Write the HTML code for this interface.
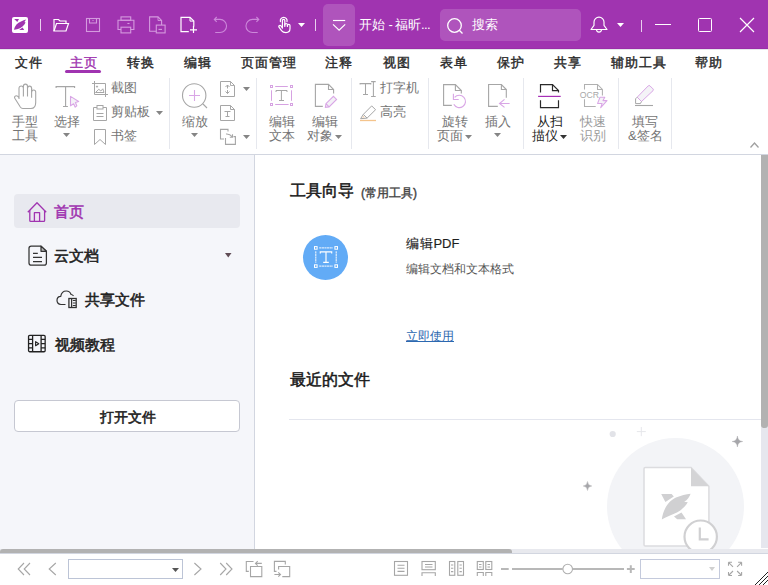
<!DOCTYPE html>
<html><head><meta charset="utf-8">
<style>
*{margin:0;padding:0;box-sizing:border-box}
html,body{width:768px;height:585px;overflow:hidden;background:#fff;font-family:"Liberation Sans",sans-serif;position:relative}
.a{position:absolute}
.t{position:absolute;white-space:nowrap}
svg{position:absolute;overflow:visible}
#title{left:0;top:0;width:768px;height:49px;background:#a034b0}
.tab{position:absolute;top:56px;font-size:13px;line-height:13px;letter-spacing:1px;font-weight:normal;-webkit-text-stroke:0.4px currentColor;color:#2a2a2a}
.rb{position:absolute;font-size:13px;line-height:14px;color:#747474;text-align:center;white-space:nowrap}
.sep{position:absolute;top:78px;width:1px;height:71px;background:#e6e8ee}
.side{position:absolute;font-size:15px;line-height:15px;-webkit-text-stroke:0.55px currentColor;color:#222;white-space:nowrap}
</style></head><body>
<!-- TITLE BAR -->
<div id="title" class="a"></div>
<div class="a" style="left:0;top:48px;width:768px;height:1px;background:#9a2ea8"></div>
<div class="a" style="left:0;top:49px;width:768px;height:1px;background:#e4e8ea"></div>

<!-- logo -->
<div class="a" style="left:12px;top:17px;width:16px;height:16px;background:#fff;border-radius:2px"></div>
<svg style="left:12px;top:17px" width="16" height="16" viewBox="0 0 16 16">
 <path d="M2.2 2.1 H7 L5.3 4.9 Z" fill="#a034b0"/>
 <path d="M1.9 12.8 C2.8 8.5 5.5 5.6 9 4.4 C10.8 3.7 12.6 3.1 14 2.6 C13.4 3.6 12.9 4.5 12.4 5 L13.6 5.6 C12 8.8 9.5 11.2 6 12 C4.5 12.3 3 12.6 1.9 12.8 Z" fill="#a034b0"/>
 <path d="M7.1 12.9 H12.2 L10.6 10.6 Z" fill="#a034b0"/>
</svg>
<div class="a" style="left:40px;top:19px;width:1px;height:12px;background:#e8d0ee"></div>

<!-- folder -->
<svg style="left:53px;top:18px" width="16" height="14" viewBox="0 0 16 14" fill="none" stroke="#fff" stroke-width="1.2">
 <path d="M1 13 V1.5 H5.5 L7 3 H13 V5.5"/><path d="M1 13 L3.5 5.5 H15.5 L13 13 Z"/>
</svg>
<!-- save faded -->
<svg style="left:86px;top:18px" width="14" height="14" viewBox="0 0 14 14" fill="none" stroke="#d49ade" stroke-width="1.1">
 <rect x="0.5" y="0.5" width="13" height="13"/><path d="M3.5 0.5 V5 H10.5 V0.5"/><path d="M6.5 2.5 H7.5"/>
</svg>
<!-- print faded -->
<svg style="left:117px;top:16px" width="18" height="18" viewBox="0 0 18 18" fill="none" stroke="#d49ade" stroke-width="1.1">
 <rect x="4" y="0.9" width="9.7" height="3.4"/><path d="M4 13.5 H1 V4.3 H16.9 V13.5 H13.7"/><rect x="4" y="11.2" width="9.7" height="5.7"/><path d="M10.4 7.5 H12.5"/>
</svg>
<!-- doc w box faded -->
<svg style="left:149px;top:16px" width="17" height="18" viewBox="0 0 17 18" fill="none" stroke="#d49ade" stroke-width="1.1">
 <path d="M7 15.3 H0.6 V0.9 H9 L12.6 4.5 V9"/><path d="M9 0.9 V4.5 H12.6" stroke-width="0.9"/><rect x="7.3" y="9.1" width="8.8" height="7.8"/><path d="M9.5 13.4 H13"/>
</svg>
<!-- new doc white -->
<svg style="left:180px;top:16px" width="18" height="18" viewBox="0 0 18 18" fill="none" stroke="#fff" stroke-width="1.2">
 <path d="M8.8 15.7 H1 V1.3 H10 L13.8 5.1 V10.5"/><path d="M10 1.3 V5.1 H13.8" stroke-width="1"/><path d="M13.5 10 V17.1 M10 13.8 H17"/>
</svg>
<!-- undo/redo faded -->
<svg style="left:205px;top:12px" width="60" height="26" viewBox="205 12 60 26" fill="none" stroke="#cc88da" stroke-width="1.1">
 <path d="M214.2 19.4 H220 A6.55 6.55 0 0 1 220 32.5 H215.2 M216.7 17 L214.3 19.4 L216.7 21.8"/>
 <path d="M258.8 19.4 H252.5 A6.55 6.55 0 0 0 252.5 32.5 H257.7 M256.4 17 L258.8 19.4 L256.4 21.8"/>
</svg>
<!-- hand -->
<svg style="left:277px;top:16px" width="16" height="18" viewBox="0 0 16 18" fill="none" stroke="#fff" stroke-width="1.2" stroke-linejoin="round" stroke-linecap="round">
 <path d="M3.4 5.6 A3.4 3.4 0 1 1 10 5.6"/>
 <path d="M5.4 12 V4.6 Q5.4 3.4 6.6 3.4 Q7.8 3.4 7.8 4.6 V10.5"/>
 <path d="M7.8 9 Q7.8 7.5 9.1 7.5 Q10.4 7.5 10.4 9 V10.5"/>
 <path d="M10.4 9.6 Q10.4 8.3 11.7 8.3 Q13 8.3 13 9.6 V12.6 Q13 16.6 9 16.6 Q6 16.6 4.5 14.6 L2 11.2 Q1.4 10.1 2.4 9.6 Q3.4 9.2 4.1 10 L5.4 11.8"/>
</svg>
<svg style="left:298px;top:23px" width="7" height="4" viewBox="0 0 7 4"><path d="M0 0 H7 L3.5 4Z" fill="#fff"/></svg>
<div class="a" style="left:315px;top:19px;width:1px;height:12px;background:#e8d0ee"></div>
<div class="a" style="left:323px;top:4px;width:32px;height:42px;background:rgba(255,255,255,0.16);border-radius:5px"></div>
<svg style="left:332px;top:19px" width="15" height="13" viewBox="0 0 15 13" fill="none" stroke="#fff" stroke-width="1.15">
 <path d="M1 1.5 H13.2"/><path d="M1 5.3 L7.1 11.2 L13.2 5.3"/>
</svg>
<div class="t" style="left:359px;top:18px;font-size:13px;line-height:13px;color:#fff">开始 -<span style="margin-left:-1.5px"> </span>福昕<span style="letter-spacing:-0.6px">...</span></div>
<!-- search -->
<div class="a" style="left:440px;top:9px;width:141px;height:32px;background:rgba(255,255,255,0.16);border-radius:5px"></div>
<svg style="left:447px;top:18px" width="17" height="16" viewBox="0 0 17 16" fill="none" stroke="#fff" stroke-width="1.3">
 <circle cx="7.5" cy="7.5" r="6.8"/><path d="M12.3 12.3 L15.5 15.5"/>
</svg>
<div class="t" style="left:472px;top:18px;font-size:13px;line-height:13px;color:#fff">搜索</div>
<!-- bell -->
<svg style="left:590px;top:16px" width="18" height="18" viewBox="0 0 18 18" fill="none" stroke="#fff" stroke-width="1.15" stroke-linejoin="round">
 <path d="M1 13.5 H17 L14 9.3 V6.1 A5 5 0 0 0 4 6.1 V9.3 Z"/><path d="M6.5 13.6 A2.5 2.5 0 0 0 11.5 13.6"/>
</svg>
<svg style="left:617px;top:23px" width="7" height="4" viewBox="0 0 7 4"><path d="M0 0 H7 L3.5 4Z" fill="#fff"/></svg>
<div class="a" style="left:641px;top:20px;width:1px;height:12px;background:#e8d0ee"></div>
<div class="a" style="left:655px;top:24px;width:16px;height:1px;background:#fff"></div>
<div class="a" style="left:698px;top:18px;width:14px;height:14px;border:1.2px solid #fff;border-radius:1.5px"></div>
<svg style="left:740px;top:18px" width="14" height="14" viewBox="0 0 14 14" stroke="#fff" stroke-width="1.2"><path d="M0 0 L14 14 M14 0 L0 14"/></svg>

<!-- TABS -->
<div class="tab" style="left:15px">文件</div>
<div class="tab" style="left:70px;color:#a034b0">主页</div>
<div class="a" style="left:65px;top:70px;width:36px;height:3px;background:#a034b0;border-radius:2px"></div>
<div class="tab" style="left:127px">转换</div>
<div class="tab" style="left:184px">编辑</div>
<div class="tab" style="left:241px">页面管理</div>
<div class="tab" style="left:325px">注释</div>
<div class="tab" style="left:383px">视图</div>
<div class="tab" style="left:440px">表单</div>
<div class="tab" style="left:497px">保护</div>
<div class="tab" style="left:554px">共享</div>
<div class="tab" style="left:611px">辅助工具</div>
<div class="tab" style="left:695px">帮助</div>

<!-- RIBBON -->
<!-- group1 -->
<svg style="left:13px;top:83px" width="24" height="27" viewBox="0 0 24 27" fill="none" stroke="#a6a6a6" stroke-width="1.1" stroke-linejoin="round">
 <path d="M6 16 V5.2 A2.2 2.2 0 0 1 10.4 5.2 V3.2 A2.05 2.05 0 0 1 14.5 3.2 V5.2 A2.05 2.05 0 0 1 18.6 5.2 V9.1 A2.05 2.05 0 0 1 22.7 9.1 V19.5 Q22.7 25.5 18 25.5 H9.8 Q8.3 25.5 7.3 24 L1.8 15.3 Q1 13.6 2.6 12.9 Q4.4 12.2 6 14.8"/>
 <path d="M10.4 5.2 V13.4 M14.5 3.2 V13.4 M18.6 5.2 V14.8"/>
</svg>
<div class="rb" style="left:12px;top:115px">手型<br>工具</div>

<svg style="left:55px;top:85px" width="25" height="24" viewBox="0 0 25 24" fill="none" stroke="#a6a6a6" stroke-width="1.1">
 <path d="M1.1 3 V1.6 H19.6 V3 M10.6 1.6 V21.5 M8 21.5 H12.9"/>
 <path d="M15.5 11.4 L23.7 16.5 L20.4 17.5 L21.8 20.8 L20.2 22.2 L18.6 18.7 L15.5 20.8 Z" stroke="#d9a6e6" fill="#f4f2f7" stroke-linejoin="round"/>
</svg>
<div class="rb" style="left:54px;top:115px">选择</div>
<svg style="left:63px;top:133px" width="7" height="4" viewBox="0 0 7 4"><path d="M0 0 H7 L3.5 4Z" fill="#858585"/></svg>

<svg style="left:92px;top:81px" width="16" height="16" viewBox="0 0 16 16" fill="none" stroke="#a6a6a6" stroke-width="1">
 <path d="M0 2.5 H13.5 V16 M2.5 0 V13.5 H16"/>
 <path d="M3.5 11.5 L6.8 8.3 L8.8 10 L10.8 7.8 L12 11.5 Z" stroke-linejoin="round"/><circle cx="5" cy="5.6" r="0.6" fill="#a6a6a6"/>
</svg>
<div class="rb" style="left:111px;top:81px">截图</div>
<svg style="left:93px;top:105px" width="14" height="16" viewBox="0 0 14 16" fill="none" stroke="#a6a6a6" stroke-width="1">
 <path d="M4 2.5 H0.5 V15.5 H13.5 V2.5 H10"/><rect x="4" y="0.5" width="6" height="3.5"/><path d="M3.5 8.5 H10.5 M3.5 11.5 H10.5"/>
</svg>
<div class="rb" style="left:111px;top:105px">剪贴板</div>
<svg style="left:156px;top:111px" width="7" height="4" viewBox="0 0 7 4"><path d="M0 0 H7 L3.5 4Z" fill="#858585"/></svg>
<svg style="left:94px;top:129px" width="12" height="16" viewBox="0 0 12 16" fill="none" stroke="#a6a6a6" stroke-width="1">
 <path d="M0.5 0.5 H11.5 V15.5 L6 10.5 L0.5 15.5 Z"/>
</svg>
<div class="rb" style="left:111px;top:129px">书签</div>
<div class="sep" style="left:169px"></div>

<!-- group2 zoom -->
<svg style="left:182px;top:83px" width="26" height="26" viewBox="0 0 26 26" fill="none" stroke-width="1.1">
 <circle cx="12.2" cy="12.5" r="11.7" stroke="#a6a6a6"/><path d="M21 21 L25 25" stroke="#a6a6a6"/>
 <path d="M12.5 7 V18 M7 12.5 H18" stroke="#d9a6e6"/>
</svg>
<div class="rb" style="left:182px;top:115px">缩放</div>
<svg style="left:191px;top:133px" width="7" height="4" viewBox="0 0 7 4"><path d="M0 0 H7 L3.5 4Z" fill="#858585"/></svg>
<svg style="left:220px;top:81px" width="16" height="16" viewBox="0 0 16 16" fill="none" stroke="#a6a6a6" stroke-width="1">
 <path d="M0.5 0.5 H10.5 L14.5 4.5 V15.5 H0.5 Z"/><path d="M10.5 0.5 V4.5 H14.5" stroke-width="0.9"/>
 <path d="M7.5 4 V7.5 M5.5 6 L7.5 4 L9.5 6 M7.5 9 V12.5 M5.5 10.5 L7.5 12.5 L9.5 10.5"/>
</svg>
<svg style="left:243px;top:87px" width="7" height="4" viewBox="0 0 7 4"><path d="M0 0 H7 L3.5 4Z" fill="#858585"/></svg>
<svg style="left:220px;top:105px" width="16" height="16" viewBox="0 0 16 16" fill="none" stroke="#a6a6a6" stroke-width="1">
 <path d="M0.5 0.5 H10.5 L14.5 4.5 V15.5 H0.5 Z"/><path d="M10.5 0.5 V4.5 H14.5"/>
 <path d="M4.5 6.5 H10.5 M7.5 6.5 V11.5 M5.5 11.5 H9.5"/>
</svg>
<svg style="left:220px;top:128px" width="17" height="18" viewBox="0 0 17 18" fill="none" stroke="#a6a6a6" stroke-width="1.1">
 <path d="M8 3.4 V1.4 H0.5 V11 H4"/>
 <path d="M5.5 10 V16.4 H15.4 V8.6 H13.5"/>
 <path d="M6 6 Q9.5 5.5 12.5 9 M12.5 6.3 V9.2 H9.8"/>
</svg>
<svg style="left:243px;top:135px" width="7" height="4" viewBox="0 0 7 4"><path d="M0 0 H7 L3.5 4Z" fill="#858585"/></svg>
<div class="sep" style="left:256px"></div>

<!-- group3 edit -->
<svg style="left:270px;top:85px" width="23" height="21" viewBox="0 0 23 21" fill="none" stroke-width="1">
 <g stroke="#d6a2e2">
 <rect x="0.5" y="0.5" width="2" height="2"/><rect x="20.5" y="0.5" width="2" height="2"/>
 <rect x="0.5" y="18.5" width="2" height="2"/><rect x="20.5" y="18.5" width="2" height="2"/>
 <path d="M5.2 1.5 H17.8 M5.2 19.5 H18.6 M1.5 5.3 V15.8 M21.5 5.3 V15.8"/>
 </g>
 <path d="M6 7 V5.5 H17 V7 M11.4 5.5 V15.5 M9 15.5 H14" stroke="#a6a6a6"/>
</svg>
<div class="rb" style="left:269px;top:115px">编辑<br>文本</div>
<svg style="left:314px;top:83px" width="25" height="26" viewBox="0 0 25 26" fill="none" stroke-width="1.1">
 <path d="M8.8 23.4 H1.4 V1.4 H14.5 L19.6 6.5 V10.6" stroke="#a6a6a6"/><path d="M14.5 1.4 V6.5 H19.6" stroke="#a6a6a6"/>
 <path d="M11.4 24.4 L11.93 20.72 L19.43 13.27 L22.57 16.43 L15.07 23.88 Z M11.93 20.72 L15.07 23.88" stroke="#d9a6e6" fill="#f3f1f6"/>
</svg>
<div class="rb" style="left:312px;top:115px">编辑</div>
<div class="rb" style="left:307px;top:129px">对象</div>
<svg style="left:335px;top:135px" width="7" height="4" viewBox="0 0 7 4"><path d="M0 0 H7 L3.5 4Z" fill="#858585"/></svg>
<div class="sep" style="left:351px"></div>

<!-- group4 -->
<svg style="left:356px;top:78px" width="24" height="46" viewBox="356 78 24 46" fill="none" stroke="#a6a6a6" stroke-width="1.05">
 <path d="M360.1 84.6 V83.6 H370.8 V84.6 M365.5 83.6 V94.5 M363 94.5 H368 M371.1 81.6 H375.7 M373.4 81.6 V96.5 M371.1 96.5 H375.7"/>
</svg>
<div class="rb" style="left:380px;top:81px">打字机</div>
<svg style="left:356px;top:100px" width="24" height="24" viewBox="356 100 24 24" fill="none" stroke-width="1">
 <path d="M363.3 114.4 L371.7 105.9 L375.6 109.7 L367.1 118.1 Z" stroke="#a6a6a6" stroke-linejoin="round"/>
 <path d="M363.3 114.4 L360.6 118.7 L367.1 118.1" stroke="#a6a6a6" stroke-linejoin="round"/>
 <path d="M362.2 117.6 L363.6 115.9 L364.6 117.3 Z" fill="#f2c08c" stroke="none"/>
 <path d="M360 120.5 H376" stroke="#f4c48c" stroke-width="1.3"/>
</svg>
<div class="rb" style="left:380px;top:105px">高亮</div>
<div class="sep" style="left:428px"></div>

<!-- group5 -->
<svg style="left:443px;top:84px" width="24" height="24" viewBox="0 0 24 24" fill="none" stroke-width="1.1">
 <path d="M8.8 21.4 H0.6 V0.6 H12.4 L18.3 6.5 V9.6" stroke="#a6a6a6"/><path d="M12.4 0.6 V6.5 H18.3" stroke="#a6a6a6"/>
 <path d="M11.6 13.4 A6.2 6.2 0 1 1 10.8 20.3" stroke="#d9a6e6"/><path d="M10.4 9.8 V15.5 H15.7" stroke="#d9a6e6"/>
</svg>
<div class="rb" style="left:442px;top:115px">旋转</div>
<div class="rb" style="left:437px;top:129px">页面</div>
<svg style="left:465px;top:135px" width="7" height="4" viewBox="0 0 7 4"><path d="M0 0 H7 L3.5 4Z" fill="#858585"/></svg>
<svg style="left:488px;top:84px" width="23" height="25" viewBox="0 0 23 25" fill="none" stroke-width="1.1">
 <path d="M9.8 22.4 H0.6 V0.5 H13.4 L18.3 5.5 V13.7" stroke="#a6a6a6"/><path d="M13.4 0.5 V5.5 H18.3" stroke="#a6a6a6"/>
 <path d="M21.6 19.5 H11.6 M16.5 15.4 L11.5 19.5 L16.5 23.4" stroke="#d9a6e6"/>
</svg>
<div class="rb" style="left:485px;top:115px">插入</div>
<svg style="left:494px;top:133px" width="7" height="4" viewBox="0 0 7 4"><path d="M0 0 H7 L3.5 4Z" fill="#858585"/></svg>
<div class="sep" style="left:523px"></div>

<!-- group6 -->
<svg style="left:537px;top:84px" width="25" height="25" viewBox="0 0 25 25" fill="none" stroke-width="1.2">
 <path d="M3.5 8.6 V0.6 H15.5 L21.5 6.6 V8.6" stroke="#2a2a2a"/><path d="M15.5 0.6 V6.6 H21.5" stroke="#2a2a2a"/>
 <path d="M3.5 16.3 V23.6 H21.5 V16.3" stroke="#2a2a2a"/>
 <path d="M1.1 12.4 H23.7" stroke="#a630b6"/>
</svg>
<div class="rb" style="left:537px;top:115px;color:#222">从扫</div>
<div class="rb" style="left:532px;top:129px;color:#222">描仪</div>
<svg style="left:560px;top:135px" width="7" height="4" viewBox="0 0 7 4"><path d="M0 0 H7 L3.5 4Z" fill="#333"/></svg>
<svg style="left:576px;top:80px" width="34" height="30" viewBox="576 80 34 30" fill="none" stroke-width="1.05">
 <path d="M584.5 89.5 V84.5 H597.5 L602.4 89.4 V95.4 M597.5 84.5 V89.4 H602.4 M584.5 99.2 V106.4 H595.7" stroke="#b0b0b0"/>
 <text x="579.8" y="97.8" font-family="Liberation Sans" font-size="8.7" fill="#a8a8a8" stroke="none">OCR</text>
 <path d="M600 97.3 H604.8 L603 100.6 H607 L600.7 107.6 L602.1 103.4 H597.6 Z" stroke="#d9a6e6" fill="#f6f3f8" stroke-linejoin="round"/>
</svg>
<div class="rb" style="left:580px;top:115px;color:#9a9a9a">快速<br>识别</div>
<div class="sep" style="left:618px"></div>

<!-- group7 -->
<svg style="left:630px;top:80px" width="30" height="30" viewBox="630 80 30 30" fill="none" stroke-width="1">
 <path d="M637.2 97.2 L648.2 85.9 Q649.1 85 650 85.9 L653 88.9 Q653.9 89.8 653 90.7 L641.5 101.5 Z" stroke="#d9a6e6" fill="#f4f3f7"/>
 <path d="M637.2 97.2 L635.6 98.8 V103.6 H640.4 L641.5 101.5" stroke="#a6a6a6"/>
 <path d="M635 105.5 H653" stroke="#a6a6a6" stroke-width="1.1"/>
</svg>
<div class="rb" style="left:632px;top:115px">填写</div>
<div class="rb" style="left:628px;top:129px">&amp;签名</div>
<div class="sep" style="left:671px"></div>
<svg style="left:750px;top:142px" width="9" height="6" viewBox="0 0 9 6" fill="none" stroke="#a0a0a0" stroke-width="1.3"><path d="M0.5 5.5 L4.5 1 L8.5 5.5"/></svg>

<div class="a" style="left:0;top:154px;width:768px;height:1px;background:#d2d6e0"></div>

<!-- SIDEBAR -->
<div class="a" style="left:0;top:155px;width:254px;height:394px;background:#f5f6fa"></div>
<div class="a" style="left:254px;top:155px;width:1px;height:394px;background:#d2d6e0"></div>
<div class="a" style="left:14px;top:194px;width:226px;height:34px;background:#e8e9ef;border-radius:4px"></div>
<svg style="left:27px;top:202px" width="20" height="20" viewBox="0 0 20 20" fill="none" stroke="#a034b0" stroke-width="1.3" stroke-linejoin="round">
 <path d="M0.8 10.2 L10 0.8 L19.2 10.2"/>
 <path d="M2.8 8.3 V18.4 Q2.8 19.3 3.7 19.3 H16.7 Q17.6 19.3 17.6 18.4 V8.3"/>
 <rect x="7.4" y="10.7" width="5.2" height="8.6" fill="#f0e2f4"/>
</svg>
<svg style="left:28px;top:245px" width="20" height="21" viewBox="0 0 20 21" fill="none" stroke="#333" stroke-width="1.25" stroke-linejoin="round">
 <path d="M13 1.1 H3.2 Q1 1.1 1 3.3 V18 Q1 20.2 3.2 20.2 H16.2 Q18.4 20.2 18.4 18 V6.3 Z"/>
 <path d="M13 1.1 V6.3 H18.4 Z" fill="#bbb"/>
 <path d="M5 8.3 H9.8 M5 12.4 H14 M5 16.5 H14"/>
</svg>
<svg style="left:225px;top:253px" width="6.5" height="4.5" viewBox="0 0 6.5 4.5"><path d="M0 0 H6.5 L3.25 4.5Z" fill="#604c55"/></svg>
<svg style="left:56px;top:290px" width="22" height="19" viewBox="0 0 22 19" fill="none" stroke="#333" stroke-width="1.2">
 <path d="M9.5 14.5 H5 C2.5 14.5 1 12.5 1 10.3 C1 8 2.6 6.4 4.7 6.3 C5.3 3 7.5 1 10.3 1 C12.6 1 14.4 2.4 15.1 4.5 C16 4.6 16.8 5 17.5 5.8"/>
 <rect x="12.9" y="8.5" width="7.3" height="9" stroke-width="1.3"/>
 <path d="M15.6 8.5 V17.5" stroke-width="1.2"/>
 <path d="M16.8 10.5 H19.8 M16.8 13 H19.8 M16.8 15.5 H19.8" stroke-width="1"/>
</svg>
<svg style="left:27px;top:334px" width="20" height="19" viewBox="0 0 20 19" fill="none" stroke="#222" stroke-width="1.3" stroke-linejoin="round">
 <rect x="1.55" y="1.35" width="16.6" height="16.4" rx="1.2"/>
 <path d="M5.6 1.35 V17.75 M14.1 1.35 V17.75"/>
 <path d="M1.55 5.4 H5.6 M1.55 9.6 H5.6 M1.55 13.8 H5.6 M14.1 5.4 H18.15 M14.1 9.6 H18.15 M14.1 13.8 H18.15"/>
 <path d="M8.6 7.6 V11.8 L11.8 9.7 Z" stroke-width="1.1"/>
</svg>
<div class="side" style="left:54px;top:204px;color:#a034b0">首页</div>
<div class="side" style="left:54px;top:248px">云文档</div>
<div class="side" style="left:85px;top:292px">共享文件</div>
<div class="side" style="left:55px;top:337px">视频教程</div>
<div class="a" style="left:14px;top:400px;width:226px;height:32px;background:#fff;border:1px solid #c6c8d2;border-radius:4px"></div>
<div class="side" style="left:100px;top:410px;font-size:14px;line-height:14px">打开文件</div>

<!-- MAIN -->
<div class="t" style="left:290px;top:183px;font-size:16px;line-height:16px;-webkit-text-stroke:0.5px #1a1a1a;color:#1a1a1a">工具向导</div>
<div class="t" style="left:361px;top:187px;font-size:12px;line-height:12px;-webkit-text-stroke:0.4px #444;color:#444">(常用工具)</div>
<div class="a" style="left:303px;top:235px;width:45px;height:45px;border-radius:50%;background:#62abf6"></div>
<svg style="left:313px;top:245px" width="26" height="24" viewBox="0 0 26 24" fill="none" stroke="#fff" stroke-width="1">
 <rect x="1.5" y="1.6" width="2.6" height="2.6"/><rect x="21.9" y="1.6" width="2.6" height="2.6"/>
 <rect x="1.5" y="19.8" width="2.6" height="2.6"/><rect x="21.9" y="19.8" width="2.6" height="2.6"/>
 <path d="M6.2 2.9 H19.8 M6.2 21.1 H19.8 M2.8 6.3 V17.7 M23.2 6.3 V17.7" stroke-dasharray="2.2 0.4" stroke-width="0.95"/>
 <path d="M7.3 8.6 V6.8 H18.7 V8.6 M13 6.8 V17.3 M10.2 17.3 H15.8" stroke-width="1.15"/>
</svg>
<!-- illustration -->
<div class="a" style="left:606.6px;top:437.8px;width:137.4px;height:137.4px;border-radius:50%;background:#f3f4f7"></div>
<svg style="left:580px;top:424px" width="170" height="125" viewBox="580 424 170 125">
 <circle cx="612.7" cy="434" r="3.1" fill="#e2e3e8"/>
 <path d="M641.3 427 V436.2 M636.8 431.6 H645.8" stroke="#e6e7eb" stroke-width="1"/>
 <path d="M737.4 436 Q737.8 441.1 742.7 441.5 Q737.8 441.9 737.4 447 Q737 441.9 732.1 441.5 Q737 441.1 737.4 436Z" fill="#a6a6aa" stroke="#a6a6aa" stroke-width="0.4"/>
 <path d="M587.5 481.5 Q587.8 485.7 591.8 486 Q587.8 486.3 587.5 490.5 Q587.2 486.3 583.2 486 Q587.2 485.7 587.5 481.5Z" fill="#a6a6aa" stroke="#a6a6aa" stroke-width="0.4"/>
 <path d="M691 467.4 H645.3 Q644 467.4 644 468.7 V544.7 Q644 546 645.3 546 H707.6 Q708.9 546 708.9 544.7 V486.3 Z" fill="#fff" stroke="#dcdcdf" stroke-width="1.5"/>
 <path d="M691 467.4 L708.9 486.3 H691 Z" fill="#d4d4d6"/>
 <path d="M661.2 494 H671.6 L673.8 496.4 L665.4 502 Z" fill="#d0d0d2"/>
 <path d="M661.8 519.5 C663 510 668 501 676 497.5 C681 495.5 686 494.5 690.6 493.8 C689.5 497 687.5 500 684.2 501.8 L687.8 502.3 C684 509 677 513 670 515.5 C667 516.7 664 518 661.8 519.5 Z" fill="#d0d0d2"/>
 <path d="M674 516.6 L681.5 512.6 L686 519.3 H677.2 Z" fill="#d0d0d2"/>
 <circle cx="700.7" cy="536.7" r="16.2" fill="#fff" stroke="#d0d0d2" stroke-width="2.2"/>
 <path d="M699.8 527.5 V539.3 H708.6" fill="none" stroke="#d0d0d2" stroke-width="2.2"/>
</svg>
<div class="t" style="left:406px;top:237px;font-size:13px;line-height:13px;color:#1e1e1e;-webkit-text-stroke:0.15px #1e1e1e"><span style="letter-spacing:0.7px">编辑</span>PDF</div>
<div class="t" style="left:406px;top:263px;font-size:12px;line-height:12px;color:#555">编辑文档和文本格式</div>
<div class="t" style="left:406px;top:330px;font-size:12px;line-height:12px;color:#2c68b0;text-decoration:underline">立即使用</div>
<div class="t" style="left:290px;top:372px;font-size:16px;line-height:16px;-webkit-text-stroke:0.5px #1a1a1a;color:#1a1a1a">最近的文件</div>
<div class="a" style="left:289px;top:419px;width:472px;height:1px;background:#e4e6ee"></div>

<!-- scrollbars -->
<div class="a" style="left:0;top:549px;width:768px;height:36px;background:#fff"></div>
<div class="a" style="left:761px;top:155px;width:7px;height:393px;background:#e6e7ee"></div>
<div class="a" style="left:761px;top:155px;width:7px;height:273px;background:#b2b2b2;border-radius:0 0 3px 3px"></div>
<div class="a" style="left:0;top:549px;width:768px;height:4px;background:#e8e9ee"></div>
<div class="a" style="left:0;top:549px;width:512px;height:4px;background:#b2b2b2;border-radius:3px 3px 0 0"></div>
<div class="a" style="left:0;top:553px;width:768px;height:1px;background:#d2d6e0"></div>

<!-- STATUS -->
<svg style="left:0;top:554px" width="768" height="31" viewBox="0 554 768 31" fill="none" stroke="#a6a6a6" stroke-width="1.1">
 <path d="M24 563 L18.2 569 L24 575 M30 563 L24.2 569 L30 575"/>
 <path d="M55.8 563 L49.2 569 L55.8 575"/>
 <path d="M194.4 563 L201 569 L194.4 575"/>
 <path d="M220.2 563 L226 569 L220.2 575 M226.2 563 L232 569 L226.2 575"/>
 <path d="M253.5 561.5 H246.3 V571.4 H248.8 M250.5 566.5 H261.8 V576.6 H250.5 Z M261.8 563.4 H255.5 M257.7 561.2 L255.5 563.4 L257.7 565.6"/>
 <path d="M276.5 571.4 H274.4 V561.4 H285.3 V564.4 M278.6 569.5 V566.5 H289.7 V576.6 H282.3 M274.4 574.5 H280.5 M278.3 572.3 L280.5 574.5 L278.3 576.7"/>
 <rect x="394.5" y="561.5" width="13" height="13.8"/><path d="M397.5 565.2 H404.5 M397.5 568.3 H404.5 M397.5 571.4 H404.5"/>
 <rect x="422" y="561.5" width="13.3" height="8.2"/><path d="M425 564.5 H432.5 M425 567 H432.5 M422 576 V572.7 H435.3 V576"/>
 <rect x="449.5" y="561.5" width="5.3" height="13.8"/><rect x="457.8" y="561.5" width="5.7" height="13.8"/>
 <path d="M451 565 H453.3 M451 568.3 H453.3 M451 571.6 H453.3 M459.5 565 H461.8 M459.5 568.3 H461.8 M459.5 571.6 H461.8"/>
 <rect x="477.3" y="561.5" width="6" height="8"/><rect x="485.8" y="561.5" width="6" height="8"/>
 <path d="M479 564.5 H481.5 M479 567 H481.5 M487.5 564.5 H490 M487.5 567 H490 M477.3 576 V572.5 H483.3 V576 M485.8 576 V572.5 H491.8 V576"/>
 <path d="M501 569 H508.7 M512 569 H562.8 M572.7 569 H624" stroke="#b8b8b8" stroke-width="2"/>
 <circle cx="567.7" cy="569" r="4.8" fill="#fff" stroke="#b0b0b0" stroke-width="1.1"/>
 <path d="M626.9 569 H634.7 M630.8 565.2 V572.9" stroke="#b8b8b8" stroke-width="2"/>
 <path d="M728.5 562.3 L733 566.8 M728.5 562.3 H732 M728.5 562.3 V565.8 M741.6 562.3 L737.1 566.8 M741.6 562.3 H738.1 M741.6 562.3 V565.8 M728.5 575.5 L733 571 M728.5 575.5 H732 M728.5 575.5 V572 M741.6 575.5 L737.1 571 M741.6 575.5 H738.1 M741.6 575.5 V572" stroke="#a6a6a6" stroke-width="1.1"/>
 <path d="M755 585 L768 572 M759 585 L768 576 M763 585 L768 580" stroke="#222" stroke-width="1"/>
</svg>
<div class="a" style="left:68px;top:559px;width:115px;height:20px;border:1.5px solid #bcc4d6;background:#fff"></div>
<svg style="left:172px;top:568px" width="7" height="4" viewBox="0 0 7 4"><path d="M0 0 H7 L3.5 4Z" fill="#555"/></svg>
<div class="a" style="left:640px;top:559px;width:80px;height:20px;border:1.5px solid #c4cadc;background:#fff"></div>
<svg style="left:709px;top:567px" width="6" height="4" viewBox="0 0 6 4"><path d="M0 0 H6 L3 4Z" fill="#d0d0d0"/></svg>

</body></html>
